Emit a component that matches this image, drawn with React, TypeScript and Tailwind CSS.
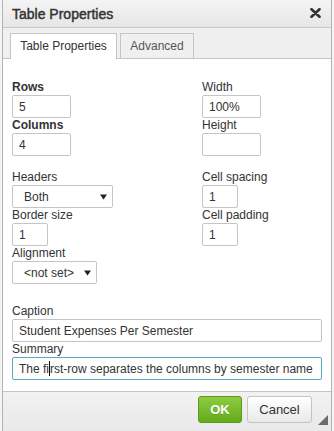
import type { ReactNode } from "react";

const font = "font-['Liberation_Sans',Arial,sans-serif]";

function Label({ children, bold = false }: { children: ReactNode; bold?: boolean }) {
  return (
    <div
      className={`h-[15px] text-[12px] leading-[14px] text-[#333] ${bold ? "font-bold" : ""}`}
    >
      {children}
    </div>
  );
}

function TextBox({ value, width }: { value: string; width: string }) {
  return (
    <input
      readOnly
      value={value}
      className={`${width} h-[23px] rounded-[2px] border border-[#c5c5c5] bg-white pl-[6px] text-[12px] leading-[14px] text-[#333] outline-none`}
    />
  );
}

function ListBox({ value, width }: { value: string; width: string }) {
  return (
    <div
      className={`${width} flex h-[23px] items-center justify-between rounded-[2px] border border-[#c5c5c5] bg-white pl-[11px] pr-[5px] text-[12px] leading-[14px] text-[#333]`}
    >
      <span>{value}</span>
      <svg width="7" height="6" viewBox="0 0 7 6">
        <path d="M0 0.5h7L3.5 5.5z" fill="#222" />
      </svg>
    </div>
  );
}

export default function App() {
  return (
    <div className={`h-[431px] w-[334px] bg-[#f4f4f4] px-[2px] ${font}`}>
      <div className="flex h-full flex-col border-x border-[#b3b3b3] bg-white">
        {/* title bar */}
        <div className="flex h-[28px] shrink-0 items-center justify-between border-b border-[#c9c9c9] bg-gradient-to-b from-[#f4f4f4] to-[#e6e6e6] pl-[9px] pr-[10px]">
          <span className="text-[14px] leading-[16px] text-[#333] [-webkit-text-stroke:0.45px_#333]">
            Table Properties
          </span>
          <svg width="11" height="10" viewBox="0 0 11 10" className="mb-[1px]">
            <path
              d="M1.5 1.2l8 7.6M9.5 1.2l-8 7.6"
              stroke="#333"
              strokeWidth="2.6"
              strokeLinecap="round"
            />
          </svg>
        </div>

        {/* tabs */}
        <div className="flex h-[31px] shrink-0 items-end gap-[3px] border-b border-[#c5c5c5] bg-[#f0f0f0] pl-[7px]">
          <div className="-mb-px flex h-[26px] w-[107px] items-center justify-center border border-b-0 border-[#c5c5c5] bg-white pb-[2px] text-[12px] leading-[14px] text-[#333]">
            Table Properties
          </div>
          <div className="flex h-[25px] w-[74px] items-center justify-center border border-b-0 border-[#c5c5c5] bg-[#f0f0f0] text-[12px] leading-[14px] text-[#555]">
            Advanced
          </div>
        </div>

        {/* body */}
        <div className="flex-1 pl-[9px] pr-[10px] pt-[21px]">
          <div className="flex">
            <div className="flex w-[190px] flex-col">
              <Label bold>Rows</Label>
              <TextBox value="5" width="w-[59px]" />
              <Label bold>Columns</Label>
              <TextBox value="4" width="w-[59px]" />
              <div className="mt-[14px]">
                <Label>Headers</Label>
              </div>
              <ListBox value="Both" width="w-[101px]" />
              <Label>Border size</Label>
              <TextBox value="1" width="w-[36px]" />
              <Label>Alignment</Label>
              <ListBox value="<not set>" width="w-[85px]" />
            </div>
            <div className="flex flex-col">
              <Label>Width</Label>
              <TextBox value="100%" width="w-[59px]" />
              <Label>Height</Label>
              <TextBox value="" width="w-[59px]" />
              <div className="mt-[14px]">
                <Label>Cell spacing</Label>
              </div>
              <TextBox value="1" width="w-[36px]" />
              <Label>Cell padding</Label>
              <TextBox value="1" width="w-[36px]" />
            </div>
          </div>

          <div className="mt-[20px] flex flex-col">
            <Label>Caption</Label>
            <TextBox value="Student Expenses Per Semester" width="w-[310px]" />
            <Label>Summary</Label>
            <div
              role="textbox"
              className="flex h-[23px] w-[310px] items-center rounded-[2px] border border-[#59a8bf] bg-white pl-[6px] text-[12px] leading-[14px] whitespace-nowrap text-[#333]"
            >
              <span>The fi</span>
              <span className="inline-block h-[15px] w-px bg-[#111]" />
              <span>rst-row separates the columns by semester name</span>
            </div>
          </div>
        </div>

        {/* footer */}
        <div className="relative flex h-[40px] shrink-0 justify-end gap-[5px] border-t border-[#c5c5c5] bg-gradient-to-b from-[#f2f2f2] to-[#e9e9e9] pr-[19px] pt-[4px]">
          <button
            type="button"
            className="h-[27px] w-[44px] rounded-[3px] border border-[#5c9a1e] bg-gradient-to-b from-[#8fcb41] to-[#63ab1a] text-[13px] font-bold text-white [text-shadow:0_1px_0_rgba(0,0,0,0.15)]"
          >
            OK
          </button>
          <button
            type="button"
            className="h-[27px] w-[65px] rounded-[3px] border border-[#c4c4c4] bg-gradient-to-b from-white to-[#e9e9e9] text-[13px] text-[#333]"
          >
            Cancel
          </button>
          <svg
            width="10"
            height="10"
            viewBox="0 0 10 10"
            className="absolute bottom-[6px] right-[3px]"
          >
            <path d="M10 0V10H0z" fill="#6b6b6b" />
          </svg>
        </div>
      </div>
    </div>
  );
}
